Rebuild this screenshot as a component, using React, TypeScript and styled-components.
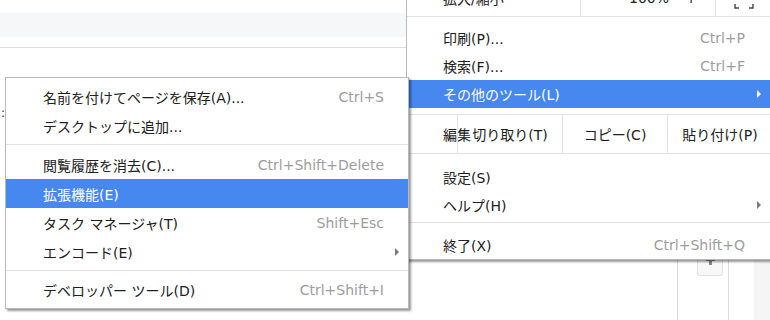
import styled, { createGlobalStyle } from 'styled-components';

const GlobalStyle = createGlobalStyle`
  html, body {
    margin: 0;
    padding: 0;
    background: #ffffff;
  }
  body {
    font-family: "DejaVu Sans", "Noto Sans CJK JP", sans-serif;
    font-size: 14px;
    color: #202020;
  }
`;

const Page = styled.div`
  position: relative;
  width: 770px;
  height: 320px;
  overflow: hidden;
  background: #ffffff;
  display: flex;
`;

const LeftPane = styled.div`
  width: 406px;
  display: flex;
  flex-direction: column;
`;

const Band = styled.div`
  margin-top: 13px;
  height: 24px;
  background: #f6f7f9;
`;

const Rule = styled.div`
  margin-top: 10px;
  height: 1px;
  background: #dedede;
`;

const StrayText = styled.div`
  margin: 58px 0 0 1px;
  font-size: 12px;
  line-height: 14px;
  color: #333;
`;

const RightPane = styled.div`
  flex: 1;
  display: flex;
`;

const Gutter = styled.div<{ $w: number; $line?: boolean; $bg?: string }>`
  width: ${(p) => p.$w}px;
  flex: ${(p) => (p.$w ? 'none' : '1')};
  border-left: ${(p) => (p.$line ? '1px solid #dcdcdc' : 'none')};
  background: ${(p) => p.$bg || 'transparent'};
  box-sizing: border-box;
`;

const AddButton = styled.div`
  margin: 259px 0 0 19px;
  width: 26px;
  height: 17px;
  border: 1px solid #e2e2e2;
  border-top: none;
  border-radius: 0 0 3px 3px;
  background: #f8f8f8;
  box-sizing: border-box;
  display: flex;
  flex-direction: column;
  align-items: center;
`;

const PlusBar = styled.span`
  width: 9px;
  height: 2px;
  background: #8a8a8a;
`;

const PlusStem = styled.span`
  width: 3px;
  height: 4px;
  background: #8a8a8a;
`;

const Menu = styled.div<{ $left: number; $top: number; $width: number }>`
  position: absolute;
  left: ${(p) => p.$left}px;
  top: ${(p) => p.$top}px;
  width: ${(p) => p.$width}px;
  background: #ffffff;
  border: 1px solid #b8b8b8;
  box-shadow: 2px 2px 2px rgba(0, 0, 0, 0.4);
  box-sizing: border-box;
`;

const Item = styled.div<{ $active?: boolean; $h: number; $padL: number; $padR: number }>`
  display: flex;
  align-items: center;
  height: ${(p) => p.$h}px;
  padding: 0 ${(p) => p.$padR}px 0 ${(p) => p.$padL}px;
  background: ${(p) => (p.$active ? '#4687f0' : 'transparent')};
  color: ${(p) => (p.$active ? '#ffffff' : '#202020')};
  white-space: nowrap;
`;

const Label = styled.span`
  flex: 1;
`;

const Shortcut = styled.span`
  color: #9d9d9d;
`;

const ArrowSlot = styled.span<{ $w: number; $show?: boolean; $light?: boolean }>`
  width: ${(p) => p.$w}px;
  display: flex;
  justify-content: flex-end;
  &::after {
    content: '';
    display: ${(p) => (p.$show ? 'block' : 'none')};
    border-left: 4px solid ${(p) => (p.$light ? '#ffffff' : '#7a7a7a')};
    border-top: 4px solid transparent;
    border-bottom: 4px solid transparent;
  }
`;

const Separator = styled.div<{ $top: number; $bottom: number }>`
  height: 1px;
  margin: ${(p) => p.$top}px 0 ${(p) => p.$bottom}px;
  background: #e3e3e3;
`;

const Padding = styled.div<{ $h: number }>`
  height: ${(p) => p.$h}px;
`;

const ZoomRow = styled.div`
  display: flex;
  align-items: center;
  height: 38px;
  border-bottom: 1px solid #e3e3e3;
  box-sizing: border-box;
  white-space: nowrap;
`;

const ZoomLabel = styled.span`
  width: 137px;
  padding-left: 36px;
`;

const ZoomCell = styled.div<{ $w: number }>`
  width: ${(p) => p.$w}px;
  align-self: stretch;
  border-left: 1px solid #e3e3e3;
  display: flex;
  align-items: center;
  justify-content: space-between;
  padding: 0 18px 0 48px;
  box-sizing: border-box;
`;

const FullscreenIcon = styled.div`
  align-self: stretch;
  border-left: 1px solid #e3e3e3;
  padding: 6px 0 0 18px;
  display: flex;
  align-items: center;
`;

const EditRow = styled.div`
  display: flex;
  height: 40px;
  border-top: 1px solid #e3e3e3;
  border-bottom: 1px solid #e3e3e3;
  box-sizing: border-box;
  white-space: nowrap;
`;

const EditLabel = styled.span`
  width: 14px;
  margin-left: 36px;
  display: flex;
  align-items: center;
  overflow: visible;
`;

const EditCell = styled.div`
  width: 105px;
  border-left: 1px solid #e3e3e3;
  display: flex;
  align-items: center;
  justify-content: center;
  box-sizing: border-box;
`;

type Entry =
  | { kind: 'item'; label: string; shortcut?: string; arrow?: boolean; active?: boolean }
  | { kind: 'sep'; top: number; bottom: number };

const subItems: Entry[] = [
  { kind: 'item', label: '名前を付けてページを保存(A)...', shortcut: 'Ctrl+S' },
  { kind: 'item', label: 'デスクトップに追加...' },
  { kind: 'sep', top: 4, bottom: 5 },
  { kind: 'item', label: '閲覧履歴を消去(C)...', shortcut: 'Ctrl+Shift+Delete' },
  { kind: 'item', label: '拡張機能(E)', active: true },
  { kind: 'item', label: 'タスク マネージャ(T)', shortcut: 'Shift+Esc' },
  { kind: 'item', label: 'エンコード(E)', arrow: true },
  { kind: 'sep', top: 4, bottom: 4 },
  { kind: 'item', label: 'デベロッパー ツール(D)', shortcut: 'Ctrl+Shift+I' },
];

const renderEntries = (
  entries: Entry[],
  h: number,
  padL: number,
  padR: number,
  arrowW: number,
) =>
  entries.map((e, i) =>
    e.kind === 'sep' ? (
      <Separator key={i} $top={e.top} $bottom={e.bottom} />
    ) : (
      <Item key={i} $active={e.active} $h={h} $padL={padL} $padR={padR}>
        <Label>{e.label}</Label>
        {e.shortcut && <Shortcut>{e.shortcut}</Shortcut>}
        <ArrowSlot $w={arrowW} $show={e.arrow} $light={e.active} />
      </Item>
    ),
  );

export default function App() {
  return (
    <>
      <GlobalStyle />
      <Page>
        <LeftPane>
          <Band />
          <Rule />
          <StrayText>:</StrayText>
        </LeftPane>
        <RightPane>
          <Gutter $w={271} />
          <Gutter $w={51} $line>
            <AddButton>
              <PlusBar />
              <PlusStem />
            </AddButton>
          </Gutter>
          <Gutter $w={26} $line />
          <Gutter $w={0} $bg="#f5f5f6" />
        </RightPane>

        <Menu $left={406} $top={-22} $width={372}>
          <ZoomRow>
            <ZoomLabel>拡大/縮小</ZoomLabel>
            <ZoomCell $w={135}>
              <span>100%</span>
              <span>+</span>
            </ZoomCell>
            <FullscreenIcon>
              <svg width="20" height="16" viewBox="0 0 20 16">
                <path
                  d="M1 5V1h4M15 1h4v4M19 11v4h-4M5 15H1v-4"
                  fill="none"
                  stroke="#444"
                  strokeWidth="1.4"
                />
              </svg>
            </FullscreenIcon>
          </ZoomRow>
          <Padding $h={7} />
          {renderEntries(
            [
              { kind: 'item', label: '印刷(P)...', shortcut: 'Ctrl+P' },
              { kind: 'item', label: '検索(F)...', shortcut: 'Ctrl+F' },
              { kind: 'item', label: 'その他のツール(L)', arrow: true, active: true },
            ],
            28,
            36,
            16,
            16,
          )}
          <Padding $h={6} />
          <EditRow>
            <EditLabel>編集</EditLabel>
            <EditCell>切り取り(T)</EditCell>
            <EditCell>コピー(C)</EditCell>
            <EditCell>貼り付け(P)</EditCell>
          </EditRow>
          <Padding $h={9} />
          {renderEntries(
            [
              { kind: 'item', label: '設定(S)' },
              { kind: 'item', label: 'ヘルプ(H)', arrow: true },
              { kind: 'sep', top: 3, bottom: 8 },
              { kind: 'item', label: '終了(X)', shortcut: 'Ctrl+Shift+Q' },
            ],
            28,
            36,
            16,
            16,
          )}
        </Menu>

        <Menu $left={5} $top={77} $width={404}>
          <Padding $h={4} />
          {renderEntries(subItems, 29, 37, 9, 15)}
          <Padding $h={4} />
        </Menu>
      </Page>
    </>
  );
}
